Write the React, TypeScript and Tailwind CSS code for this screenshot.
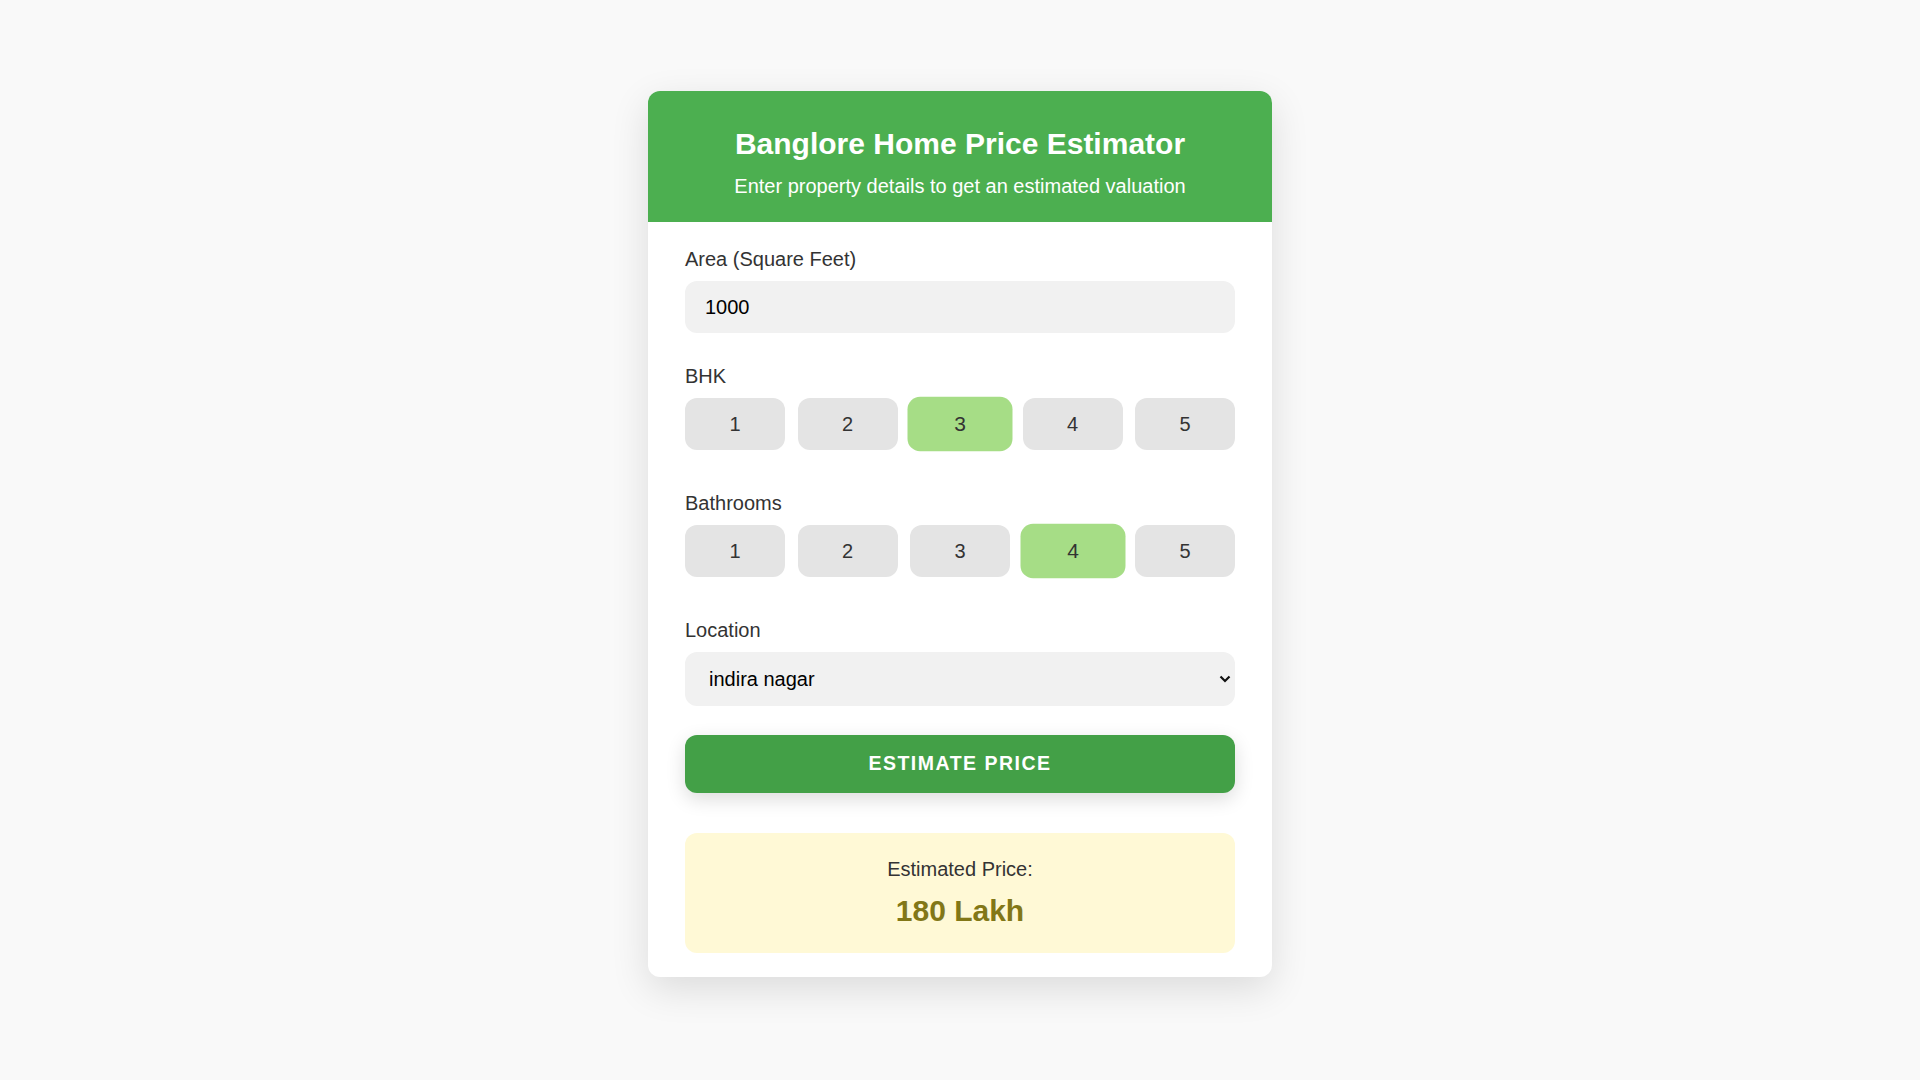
import { useState } from "react";

const OPTIONS = [1, 2, 3, 4, 5];

type ChoiceRowProps = {
  value: number;
  onPick: (n: number) => void;
};

const ChoiceRow = ({ value, onPick }: ChoiceRowProps) => {
  return (
    <div className="flex gap-[12.5px]">
      {OPTIONS.map((n) => (
        <button
          key={n}
          type="button"
          onClick={() => onPick(n)}
          className={
            n === value
              ? "flex-1 h-[52px] rounded-[12px] bg-[#a6dd86] text-[20px] text-[#333] scale-105"
              : "flex-1 h-[52px] rounded-[12px] bg-[#e4e4e4] text-[20px] text-[#333]"
          }
        >
          {n}
        </button>
      ))}
    </div>
  );
};

const App = () => {
  const [area, setArea] = useState("1000");
  const [bhk, setBhk] = useState(3);
  const [bath, setBath] = useState(4);
  const [location, setLocation] = useState("indira nagar");

  return (
    <div className="min-h-screen bg-[#f9f9f9] pt-[91px] font-['Liberation_Sans',Arial,sans-serif]">
      <div className="mx-auto w-[624px] rounded-[12px] bg-white shadow-[0_12px_38px_rgba(0,0,0,0.12)] overflow-hidden">
        {/* header */}
        <div className="bg-[#4caf50] pt-[35px] pb-[21px] text-center text-white">
          <h1 className="text-[30px] leading-[36px] font-bold">Banglore Home Price Estimator</h1>
          <p className="mt-[9px] text-[20px] leading-[30px]">Enter property details to get an estimated valuation</p>
        </div>

        <div className="px-[37px] pt-[25px] pb-[24px] flex flex-col">
          <label className="text-[20px] leading-[24px] text-[#333]">Area (Square Feet)</label>
          <input
            value={area}
            onChange={(e) => setArea(e.target.value)}
            className="mt-[10px] h-[52px] rounded-[12px] bg-[#f1f1f1] px-[20px] text-[20px] text-black outline-none"
          />

          <label className="mt-[31px] text-[20px] leading-[24px] text-[#333]">BHK</label>
          <div className="mt-[10px]">
            <ChoiceRow value={bhk} onPick={setBhk} />
          </div>

          <label className="mt-[41px] text-[20px] leading-[24px] text-[#333]">Bathrooms</label>
          <div className="mt-[10px]">
            <ChoiceRow value={bath} onPick={setBath} />
          </div>

          <label className="mt-[41px] text-[20px] leading-[24px] text-[#333]">Location</label>
          <div className="relative mt-[10px]">
            <select
              value={location}
              onChange={(e) => setLocation(e.target.value)}
              className="w-full h-[54px] appearance-none rounded-[12px] bg-[#f1f1f1] pl-[24px] pr-[40px] text-[20px] text-black outline-none"
            >
              <option>indira nagar</option>
              <option>whitefield</option>
              <option>electronic city</option>
              <option>hsr layout</option>
            </select>
            <svg
              className="absolute right-[4px] top-[23px] pointer-events-none"
              width="12"
              height="8"
              viewBox="0 0 12 8"
              fill="none"
            >
              <path d="M1.5 1.5 L6 6 L10.5 1.5" stroke="#111" strokeWidth="2.2" />
            </svg>
          </div>

          <button
            type="button"
            className="mt-[29px] h-[58px] rounded-[12px] bg-[#43a047] text-white text-[19.5px] font-bold tracking-[1.5px] uppercase shadow-[0_6px_19px_rgba(0,0,0,0.14)]"
          >
            Estimate Price
          </button>

          <div className="mt-[40px] rounded-[12px] bg-[#fff9d6] pt-[24px] pb-[24px] text-center">
            <p className="text-[20px] leading-[24px] text-[#333]">Estimated Price:</p>
            <p className="mt-[12px] text-[30px] leading-[36px] font-bold text-[#827717]">180 Lakh</p>
          </div>
        </div>
      </div>
    </div>
  );
};

export default App;
